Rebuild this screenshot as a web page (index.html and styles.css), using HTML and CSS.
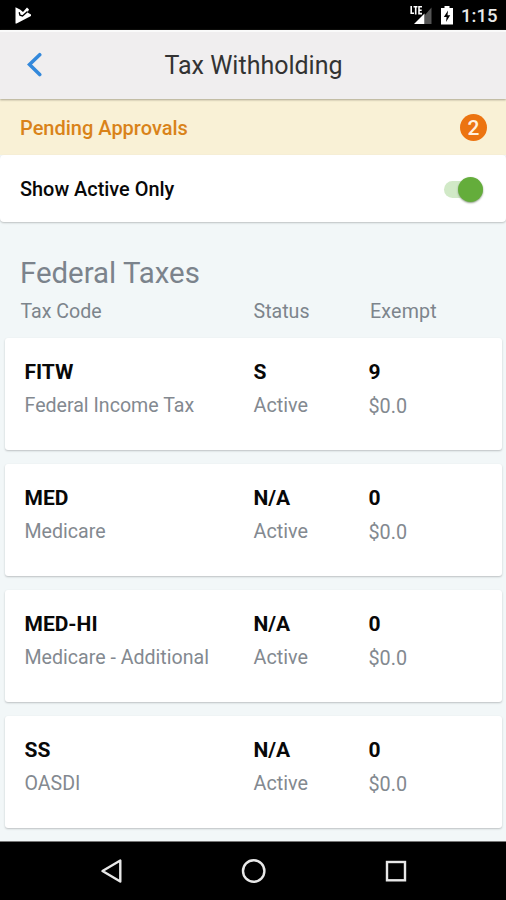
FILE: index.html
```html
<!DOCTYPE html>
<html lang="en">
<head>
<meta charset="utf-8">
<title>Tax Withholding</title>
<link rel="stylesheet" href="styles.css">
</head>
<body>
<div class="statusbar">
  <svg class="notice" width="17" height="17" viewBox="0 0 17 17"><path d="M.5 .3 5 2.5 8 5 12 .5 14 2.5 12.5 5.5 16 7.5V9L1.6 16.5H.5Z" fill="#fff"/><path d="M4.2 5.2 5 8.2 7.5 9 12.5 4.5" fill="none" stroke="#000" stroke-width="1.4"/></svg>
  <div class="indicators">
    <svg width="24" height="20" viewBox="0 0 24 20"><path d="M16 9V18H22.5V1.5Z" fill="#555"/><path d="M5 18 15.5 7.5V18Z" fill="#fff"/><path d="M2.2 0V7.2H5M4.5 .8H8.5M6.7 .8V8.5M13 .8H10V7.6H13M10 4.2H12.7" fill="none" stroke="#fff" stroke-width="1.6"/></svg>
    <svg class="battery" width="12" height="19" viewBox="0 0 12 19"><path d="M3.5 0H8.5V2H12V18.5H0V2H3.5Z" fill="#fff"/><path d="M7 4.5 2.8 11H5.6L5 16 9.2 9.3H6.5Z" fill="#000"/></svg>
    <span class="clock">1:15</span>
  </div>
</div>
<header class="header">
  <svg class="back" width="16" height="26" viewBox="0 0 16 26"><path d="M12.7 2.7 2.5 12.5 12.7 22.5" fill="none" stroke="#3388db" stroke-width="3.6" stroke-linecap="round"/></svg>
  <h1 class="title">Tax Withholding</h1>
</header>
<div class="pending"><span class="pending-label">Pending Approvals</span><span class="badge">2</span></div>
<div class="filter"><span class="filter-label">Show Active Only</span><span class="switch"><span class="knob"></span></span></div>
<main class="content">
  <h2 class="section">Federal Taxes</h2>
  <div class="columns"><span>Tax Code</span><span>Status</span><span class="exempt">Exempt</span></div>
  <div class="cards">
    <article class="card"><div><b>FITW</b><p class="name">Federal Income Tax</p></div><div><b>S</b><p>Active</p></div><div><b>9</b><p class="amount">$0.0</p></div></article>
    <article class="card"><div><b>MED</b><p class="name">Medicare</p></div><div><b>N/A</b><p>Active</p></div><div><b>0</b><p class="amount">$0.0</p></div></article>
    <article class="card"><div><b>MED-HI</b><p class="name">Medicare - Additional</p></div><div><b>N/A</b><p>Active</p></div><div><b>0</b><p class="amount">$0.0</p></div></article>
    <article class="card"><div><b>SS</b><p class="name">OASDI</p></div><div><b>N/A</b><p>Active</p></div><div><b>0</b><p class="amount">$0.0</p></div></article>
  </div>
</main>
<nav class="navbar">
  <svg width="506" height="58" viewBox="0 1 506 58"><g fill="none" stroke="#e8e8e8" stroke-width="2.4"><path d="M102.5 30 120.3 19.5V40.5Z" stroke-linejoin="round"/><circle cx="253.7" cy="30" r="10.7"/><rect x="387" y="21" width="18" height="18.3"/></g></svg>
</nav>
</body>
</html>
```
FILE: styles.css
```css
* { box-sizing: border-box; }
body { margin: 0; width: 506px; height: 900px; overflow: hidden; display: flex; flex-direction: column; background: #f2f7f8; font-family: Roboto, sans-serif; color: #080808; }
h1, h2, p { margin: 0; font-weight: 400; }
.statusbar { height: 30px; flex: none; background: #000; display: flex; justify-content: space-between; padding: 7px 11px 0 15px; }
.indicators { display: flex; margin-top: -1px; }
.battery { margin-left: 8px; }
.clock { width: 34px; margin-left: 8px; font-size: 18.5px; font-weight: 500; line-height: 20px; color: #e9e9e9; white-space: nowrap; }
.header { height: 69px; flex: none; background: #f0eeef; border-top: 2px solid #fafafa; padding: 0 27px; display: flex; align-items: center; position: relative; z-index: 1; box-shadow: 0 1px 2px #aaa58e; }
.back { margin-top: -1px; }
.title { flex: 1; margin: 1px 15px 0 0; text-align: center; font-size: 25px; line-height: 30px; color: #333; }
.pending { height: 56px; flex: none; background: #f9f1d6; display: flex; align-items: center; justify-content: space-between; padding: 0 19px 0 20px; }
.pending-label { margin-top: 2px; font-size: 20px; font-weight: 500; color: #d98319; }
.badge { width: 27px; height: 27px; border-radius: 50%; background: #ec7411; color: #fff0df; font-size: 21px; line-height: 28px; text-align: center; font-weight: 500; }
.filter { height: 67px; flex: none; background: #fff; border-radius: 4px; box-shadow: 0 1px 2px #bcc0c1; display: flex; align-items: center; justify-content: space-between; padding: 1px 23px 0 20px; }
.filter-label { margin-top: 1px; font-size: 19.9px; font-weight: 500; }
.switch { width: 39px; height: 17px; border-radius: 9px; background: #d1e9c7; display: flex; align-items: center; justify-content: flex-end; }
.knob { width: 25px; height: 25px; flex: none; border-radius: 50%; background: #64ad3b; box-shadow: 0 1px 2px #8a9a82; }
.content { flex: 1; padding: 33px 4px 0 5px; }
.section { padding-left: 15px; font-size: 29.4px; line-height: 36px; color: #7b838c; }
.columns { display: grid; grid-template-columns: 233px 116.5px 1fr; padding: 8px 0 0 15.5px; height: 47px; font-size: 19.6px; line-height: 26px; color: #7d858c; }
.exempt { letter-spacing: .2px; }
.cards { display: flex; flex-direction: column; gap: 14px; }
.card { height: 112px; background: #fff; border-radius: 3px; box-shadow: 0 1px 2px #bbc0c2; display: grid; grid-template-columns: 229px 115px 1fr; padding: 20px 0 0 19.5px; }
.card b { display: block; font-size: 21px; line-height: 28px; font-weight: 700; }
.card p { margin-top: 7px; font-size: 19.8px; line-height: 26px; color: #838990; }
.card .name { font-size: 19.6px; }
.card .amount { margin-top: 8px; }
.navbar { height: 59px; flex: none; background: #000; border-top: 1px solid #777; }
.navbar svg { display: block; }
```
